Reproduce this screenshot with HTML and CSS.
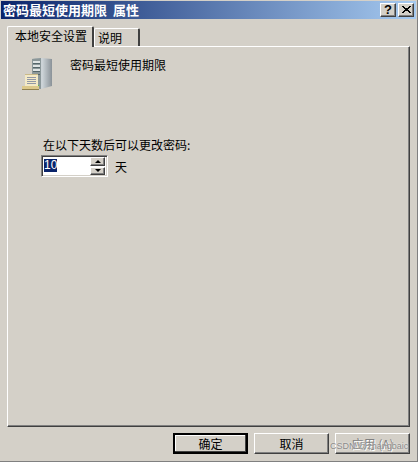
FILE: index.html
```html
<!DOCTYPE html>
<html lang="zh-CN">
<head>
    <meta charset="UTF-8">
    <title>密码最短使用期限 属性</title>
    <link rel="stylesheet" href="styles.css">
</head>
<body>
    <div class="window">
        <div class="titlebar">
            <span class="title">密码最短使用期限&nbsp;&nbsp;属性</span>
            <button class="cap-btn">?</button>
            <button class="cap-btn">
                <svg width="9" height="8" viewBox="0 0 9 8"><path d="M0 0h2v1h1v1h3v-1h1v-1h2v1h-1v1h-1v1h-1v1h1v1h1v1h1v1h-2v-1h-1v-1h-3v1h-1v1h-2v-1h1v-1h1v-1h1v-1h-1v-1h-1v-1h-1z" fill="#000"/></svg>
            </button>
        </div>
        <div class="tabs">
            <div class="tab tab-active">本地安全设置</div>
            <div class="tab">说明</div>
        </div>
        <div class="panel">
            <div class="policy">
                <svg class="policy-icon" width="32" height="33" viewBox="0 0 32 33">
                    <defs>
                        <linearGradient id="towerSide" x1="0" y1="0" x2="1" y2="0">
                            <stop offset="0" stop-color="#8f9aa0"/>
                            <stop offset="0.5" stop-color="#cfd6da"/>
                            <stop offset="1" stop-color="#8a9298"/>
                        </linearGradient>
                    </defs>
                    <path d="M10 2l9-1 11 1v27l-11 3-9-1z" fill="url(#towerSide)"/>
                    <path d="M10 2l9-1v31l-9-1z" fill="#8b9799"/>
                    <path d="M11 4h7v2h-7zM11 8h7v2h-7zM11 12h7v2h-7z" fill="#dfe4e4"/>
                    <path d="M11 6h7v1h-7zM11 10h7v1h-7zM11 14h7v1h-7zM11 17h7v1h-7z" fill="#55666a"/>
                    <path d="M15 28h2v2h-2z" fill="#5cc04a"/>
                    <path d="M3 17h13v13H3z" fill="#f3e9c6"/>
                    <path d="M3 17h13v1H3z" fill="#c9b98a"/>
                    <path d="M5 20h9v1H5zM5 22h9v1H5zM5 24h9v1H5zM5 26h9v1H5z" fill="#9298a6"/>
                    <path d="M0 29h17v3H0z" fill="#dcc88a"/>
                    <path d="M0 32h17v1H0z" fill="#8f8050"/>
                </svg>
                <span class="policy-name">密码最短使用期限</span>
            </div>
            <div class="field-label">在以下天数后可以更改密码:</div>
            <div class="field">
                <div class="spinner">
                    <div class="spin-input"><span class="spin-value">10</span></div>
                    <div class="spin-btns">
                        <div class="spin-btn"><i class="arrow-up"></i></div>
                        <div class="spin-btn"><i class="arrow-down"></i></div>
                    </div>
                </div>
                <span class="unit">天</span>
            </div>
        </div>
        <div class="actions">
            <button class="btn btn-default">确定</button>
            <button class="btn">取消</button>
            <button class="btn btn-disabled">应用 (A)</button>
        </div>
        <div class="watermark">CSDN @zhangbaic</div>
    </div>
</body>
</html>
```

FILE: styles.css
```css
html, body {
    margin: 0;
    padding: 0;
}
body {
    width: 418px;
    height: 462px;
    overflow: hidden;
    background: #d4d0c8;
    font-family: "Noto Sans CJK SC", "Liberation Sans", sans-serif;
    font-size: 12px;
    color: #000;
}
.window {
    position: relative;
    box-sizing: border-box;
    width: 418px;
    height: 462px;
    padding: 1px 1px 0 1px;
    background: #d4d0c8;
    border-bottom: 1px solid #808080;
    border-right: 1px solid #808080;
}
.titlebar {
    display: flex;
    align-items: center;
    height: 18px;
    padding: 0 2px 0 2px;
    background: linear-gradient(to right, #0a246a, #a6caf0);
    color: #fff;
}
.title {
    flex: 1;
    font-weight: bold;
    font-size: 13px;
    line-height: 18px;
}
.cap-btn {
    display: flex;
    align-items: center;
    justify-content: center;
    width: 16px;
    height: 14px;
    margin-left: 2px;
    padding: 0;
    border: 1px solid;
    border-color: #fff #404040 #404040 #fff;
    box-shadow: inset -1px -1px 0 #808080;
    background: #d4d0c8;
    font-family: "Liberation Sans", sans-serif;
    font-size: 13px;
    font-weight: bold;
    line-height: 12px;
}
.tabs {
    display: flex;
    align-items: flex-end;
    height: 27px;
    padding-left: 6px;
}
.tab {
    box-sizing: border-box;
    width: 46px;
    height: 18px;
    padding-left: 3px;
    border-top: 1px solid #fff;
    border-left: 1px solid #fff;
    border-right: 2px solid #404040;
    border-radius: 2px 2px 0 0;
    line-height: 18px;
    white-space: nowrap;
}
.tab-active {
    position: relative;
    z-index: 1;
    width: 87px;
    height: 21px;
    padding-left: 7px;
    margin-bottom: -1px;
    background: #d4d0c8;
    line-height: 18px;
}
.panel {
    box-sizing: border-box;
    width: 403px;
    height: 381px;
    margin-left: 6px;
    padding: 10px 0 0 14px;
    border-top: 1px solid #fff;
    border-left: 1px solid #fff;
    border-right: 1px solid #404040;
    border-bottom: 1px solid #404040;
    box-shadow: inset -1px -1px 0 #808080;
}
.policy {
    display: flex;
    align-items: flex-start;
    height: 80px;
}
.policy-icon {
    flex: none;
}
.policy-name {
    margin-left: 16px;
    line-height: 16px;
}
.field-label {
    margin-left: 21px;
    line-height: 16px;
}
.field {
    display: flex;
    align-items: center;
    margin: 2px 0 0 19px;
}
.spinner {
    display: flex;
    box-sizing: border-box;
    width: 67px;
    height: 22px;
    border: 1px solid;
    border-color: #808080 #fff #fff #808080;
    box-shadow: inset 1px 1px 0 #404040, inset -1px -1px 0 #d4d0c8;
    background: #fff;
    padding: 2px;
}
.spin-input {
    flex: 1;
    padding: 1px 0 0 0;
}
.spin-value {
    display: block;
    width: 13px;
    height: 13px;
    background: #0a246a;
    color: #fff;
    font-family: "Liberation Sans", sans-serif;
    font-size: 12px;
    line-height: 13px;
}
.spin-btns {
    display: flex;
    flex-direction: column;
    gap: 1px;
    width: 15px;
    margin: -1px 0;
}
.spin-btn {
    display: flex;
    flex: 1;
    align-items: center;
    justify-content: center;
    box-sizing: border-box;
    border: 1px solid;
    border-color: #fff #404040 #404040 #fff;
    box-shadow: inset -1px -1px 0 #808080;
    background: #d4d0c8;
}
.arrow-up, .arrow-down {
    width: 0;
    height: 0;
    border-left: 3px solid transparent;
    border-right: 3px solid transparent;
}
.arrow-up {
    border-bottom: 3px solid #000;
}
.arrow-down {
    border-top: 3px solid #000;
}
.unit {
    margin-left: 7px;
}
.actions {
    display: flex;
    justify-content: flex-end;
    gap: 6px;
    margin-top: 6px;
    padding-right: 6px;
}
.btn {
    box-sizing: border-box;
    width: 75px;
    height: 21px;
    padding: 0;
    border: 1px solid;
    border-color: #fff #404040 #404040 #fff;
    box-shadow: inset -1px -1px 0 #808080;
    background: #d4d0c8;
    font-family: inherit;
    font-size: 12px;
    line-height: 17px;
    color: #000;
}
.btn-default {
    border: 2px solid #000;
    box-shadow: inset -1px -1px 0 #404040, inset 1px 1px 0 #fff;
}
.btn-disabled {
    color: #808080;
    text-shadow: 1px 1px 0 #fff;
}
.watermark {
    position: absolute;
    left: 330px;
    top: 439px;
    font-family: "Liberation Sans", sans-serif;
    font-size: 9px;
    line-height: 14px;
    color: #8a8a8a;
    text-shadow: 0 0 2px #fff;
    white-space: nowrap;
}
```
